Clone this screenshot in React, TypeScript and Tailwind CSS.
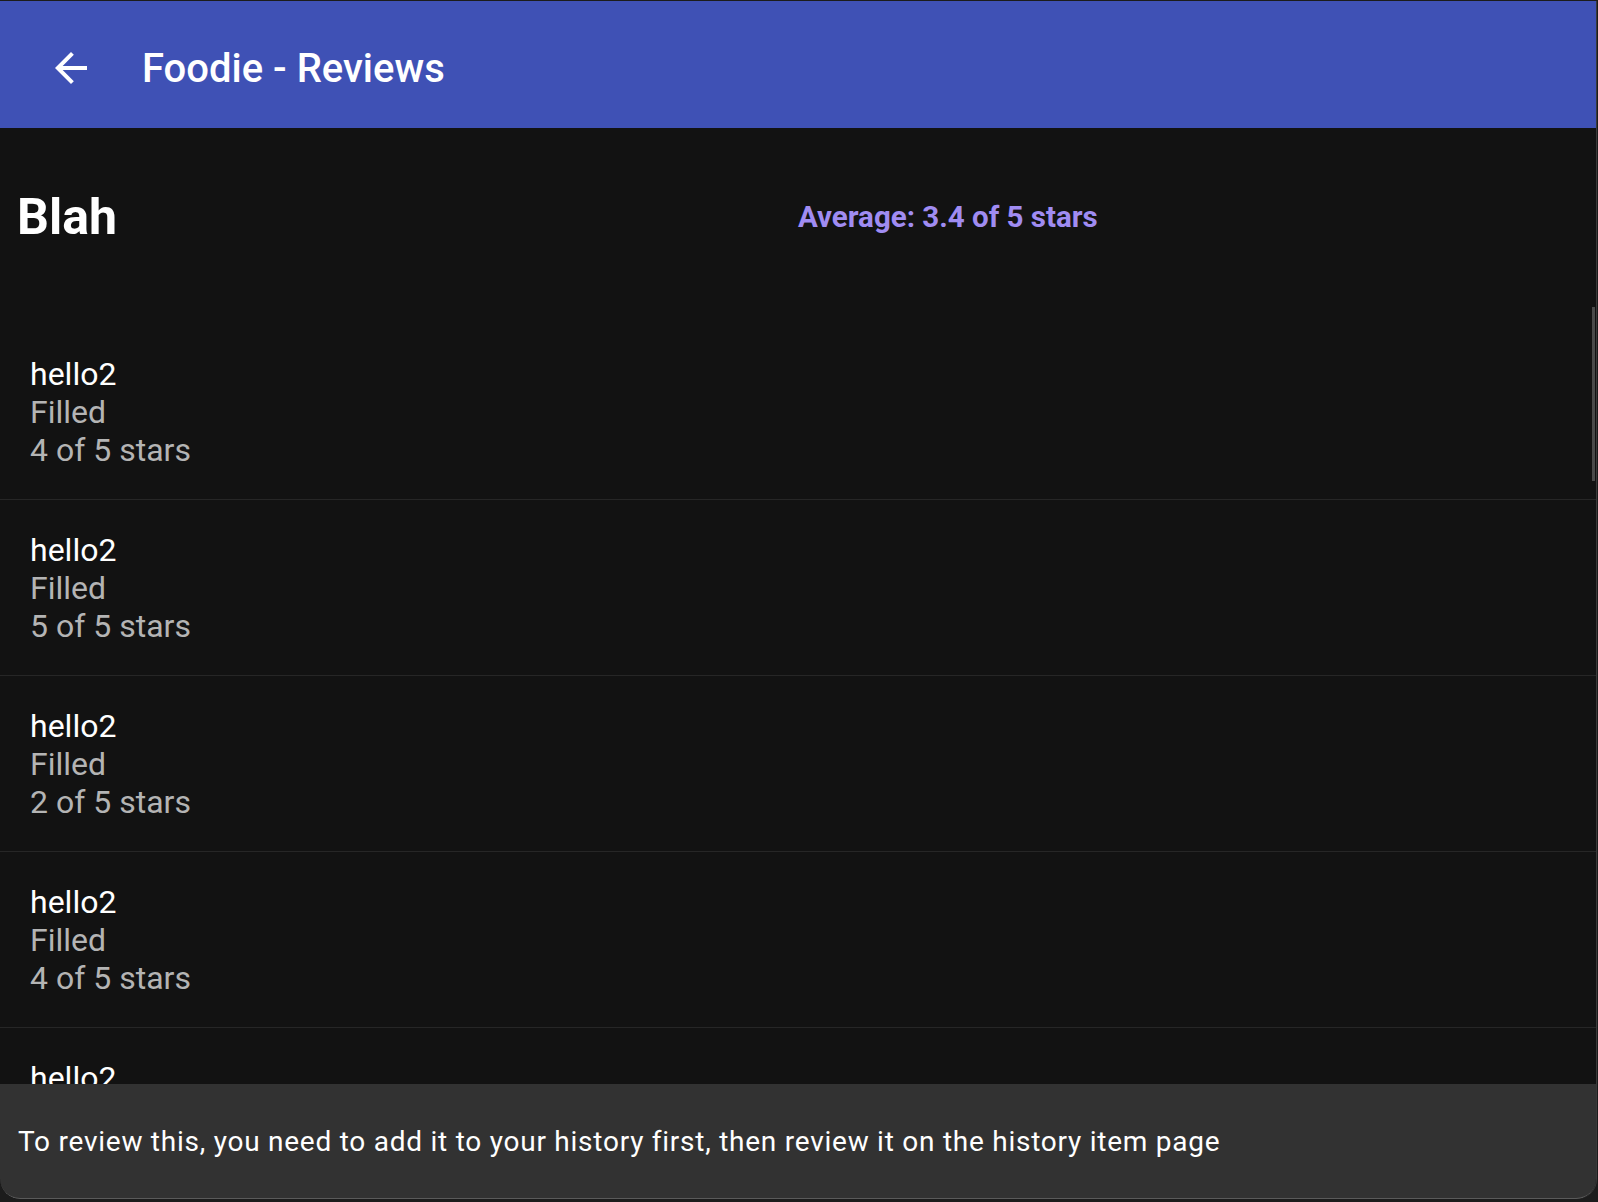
const reviews = [
  { user: "hello2", status: "Filled", stars: 4 },
  { user: "hello2", status: "Filled", stars: 5 },
  { user: "hello2", status: "Filled", stars: 2 },
  { user: "hello2", status: "Filled", stars: 4 },
  { user: "hello2", status: "Filled", stars: 3 },
];

const BackArrow = () => (
  <svg width="48" height="48" viewBox="0 0 24 24" fill="#ffffff">
    <path d="M20 11H7.83l5.59-5.59L12 4l-8 8 8 8 1.41-1.41L7.83 13H20v-2z" />
  </svg>
);

const App = () => {
  return (
    <div className="h-[1202px] w-full overflow-hidden bg-[#1c1c1c] font-['Roboto',sans-serif]">
      <div className="relative mt-[1px] h-[1198px] w-[1597px] overflow-hidden rounded-b-[20px] border-r border-[#3a3a3a] bg-[#121212]">
        {/* App bar */}
        <header className="flex h-[127px] items-center bg-[#3f51b5] pt-[8px] text-white">
          <div className="-mt-[2px] ml-[47px] flex h-[48px] w-[48px] items-center justify-center">
            <BackArrow />
          </div>
          <h1 className="ml-[47px] text-[40px] font-medium leading-[47px]">
            Foodie - Reviews
          </h1>
        </header>

        {/* Title row */}
        <div className="grid h-[178px] grid-cols-2 items-center px-4">
          <h2 className="pl-[1px] text-[50px] font-bold leading-[58px] text-white">
            Blah
          </h2>
          <p className="text-[29.5px] font-bold leading-[36px] text-[#a08cf2]">
            Average: 3.4 of 5 stars
          </p>
        </div>

        {/* Reviews */}
        <div className="h-[778px] overflow-hidden">
          <ul className="pt-[18px]">
            {reviews.map((r, i) => (
              <li
                key={i}
                className="border-b border-[#262626] pb-[30px] pl-[30px] pt-[31px] text-[32px] leading-[38px]"
              >
                <div className="text-white">{r.user}</div>
                <div className="text-[#b4b4b4]">{r.status}</div>
                <div className="text-[#b4b4b4]">{r.stars} of 5 stars</div>
              </li>
            ))}
          </ul>
        </div>

        {/* Scrollbar thumb */}
        <div className="absolute right-[1px] top-[306px] h-[174px] w-[3px] bg-[#4a4a4a]" />

        {/* Snackbar */}
        <div className="absolute bottom-0 left-0 right-0 flex h-[115px] items-center rounded-b-[20px] border-b border-[#5a5a5a] bg-[#323232] pl-[18px]">
          <span className="text-[28px] leading-[33px] tracking-[0.75px] text-white">
            To review this, you need to add it to your history first, then review it on the history item page
          </span>
        </div>
      </div>
    </div>
  );
};

export default App;
